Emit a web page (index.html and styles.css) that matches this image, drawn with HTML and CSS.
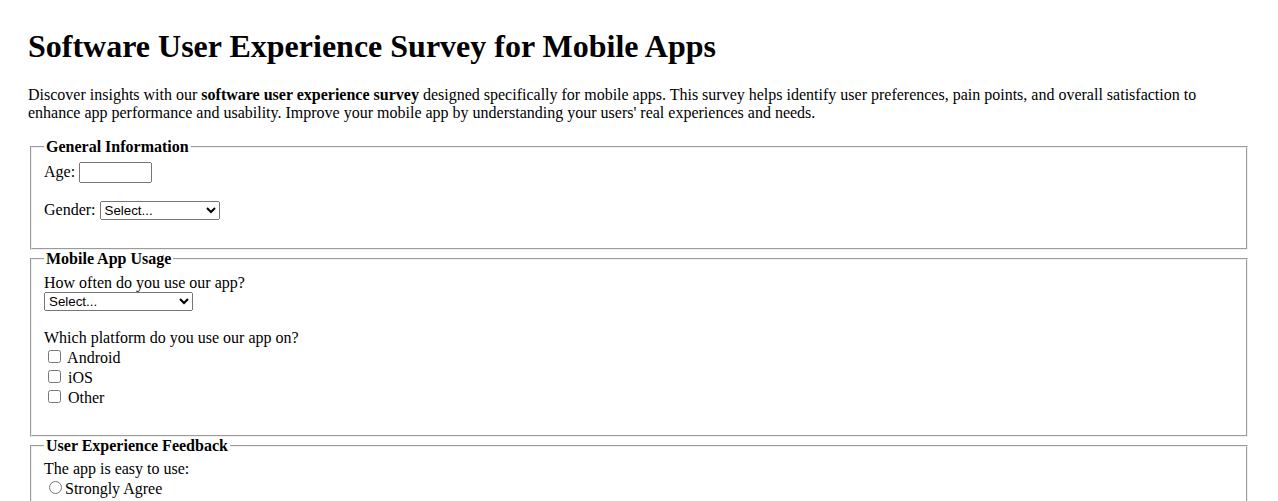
FILE: index.html
```html
<!DOCTYPE html>
<html lang="en">
<head>
  <meta charset="UTF-8">
  <meta name="viewport" content="width=device-width, initial-scale=1.0">
  <title>Software User Experience Survey for Mobile Apps</title>
  <link rel="stylesheet" href="styles.css">
</head>
<body>
  <h1>Software User Experience Survey for Mobile Apps</h1>
  <p>Discover insights with our <strong>software user experience survey</strong> designed specifically for mobile apps. This survey helps identify user preferences, pain points, and overall satisfaction to enhance app performance and usability. Improve your mobile app by understanding your users' real experiences and needs.</p>

  <form class="survey">
    <fieldset>
      <legend>General Information</legend>
      <div class="field">
        <label for="age">Age:</label>
        <input type="text" id="age" name="age" class="age-input">
      </div>
      <div class="field">
        <label for="gender">Gender:</label>
        <select id="gender" name="gender" class="gender-select">
          <option>Select...</option>
          <option>Male</option>
          <option>Female</option>
          <option>Other</option>
        </select>
      </div>
    </fieldset>

    <fieldset>
      <legend>Mobile App Usage</legend>
      <div class="field">
        <label for="frequency" class="block">How often do you use our app?</label>
        <select id="frequency" name="frequency" class="freq-select">
          <option>Select...</option>
          <option>Daily</option>
          <option>Weekly</option>
          <option>Monthly</option>
          <option>Rarely</option>
        </select>
      </div>
      <div class="field">
        <span class="block">Which platform do you use our app on?</span>
        <label class="block"><input type="checkbox" name="platform" value="android"> Android</label>
        <label class="block"><input type="checkbox" name="platform" value="ios"> iOS</label>
        <label class="block"><input type="checkbox" name="platform" value="other"> Other</label>
      </div>
    </fieldset>

    <fieldset>
      <legend>User Experience Feedback</legend>
      <div class="field">
        <span class="block">The app is easy to use:</span>
        <label class="block"><input type="radio" name="ease" value="5">Strongly Agree</label>
        <label class="block"><input type="radio" name="ease" value="4">Agree</label>
        <label class="block"><input type="radio" name="ease" value="3">Neutral</label>
        <label class="block"><input type="radio" name="ease" value="2">Disagree</label>
        <label class="block"><input type="radio" name="ease" value="1">Strongly Disagree</label>
      </div>
    </fieldset>
  </form>
</body>
</html>
```

FILE: styles.css
```css
body {
  margin: 0;
  padding: 28px;
  font-family: "Liberation Serif", "Times New Roman", serif;
  font-size: 16px;
  color: #000;
  background: #fff;
}

h1 {
  margin-top: 0;
  font-size: 32px;
}

legend {
  font-weight: bold;
}

input, select {
  font-family: "Liberation Sans", Arial, sans-serif;
  font-size: 13.33px;
}

.field {
  margin-bottom: 18px;
}

.block {
  display: block;
}

.age-input {
  width: 73px;
  box-sizing: border-box;
}

.gender-select {
  width: 120px;
}

.freq-select {
  width: 149px;
}
```
